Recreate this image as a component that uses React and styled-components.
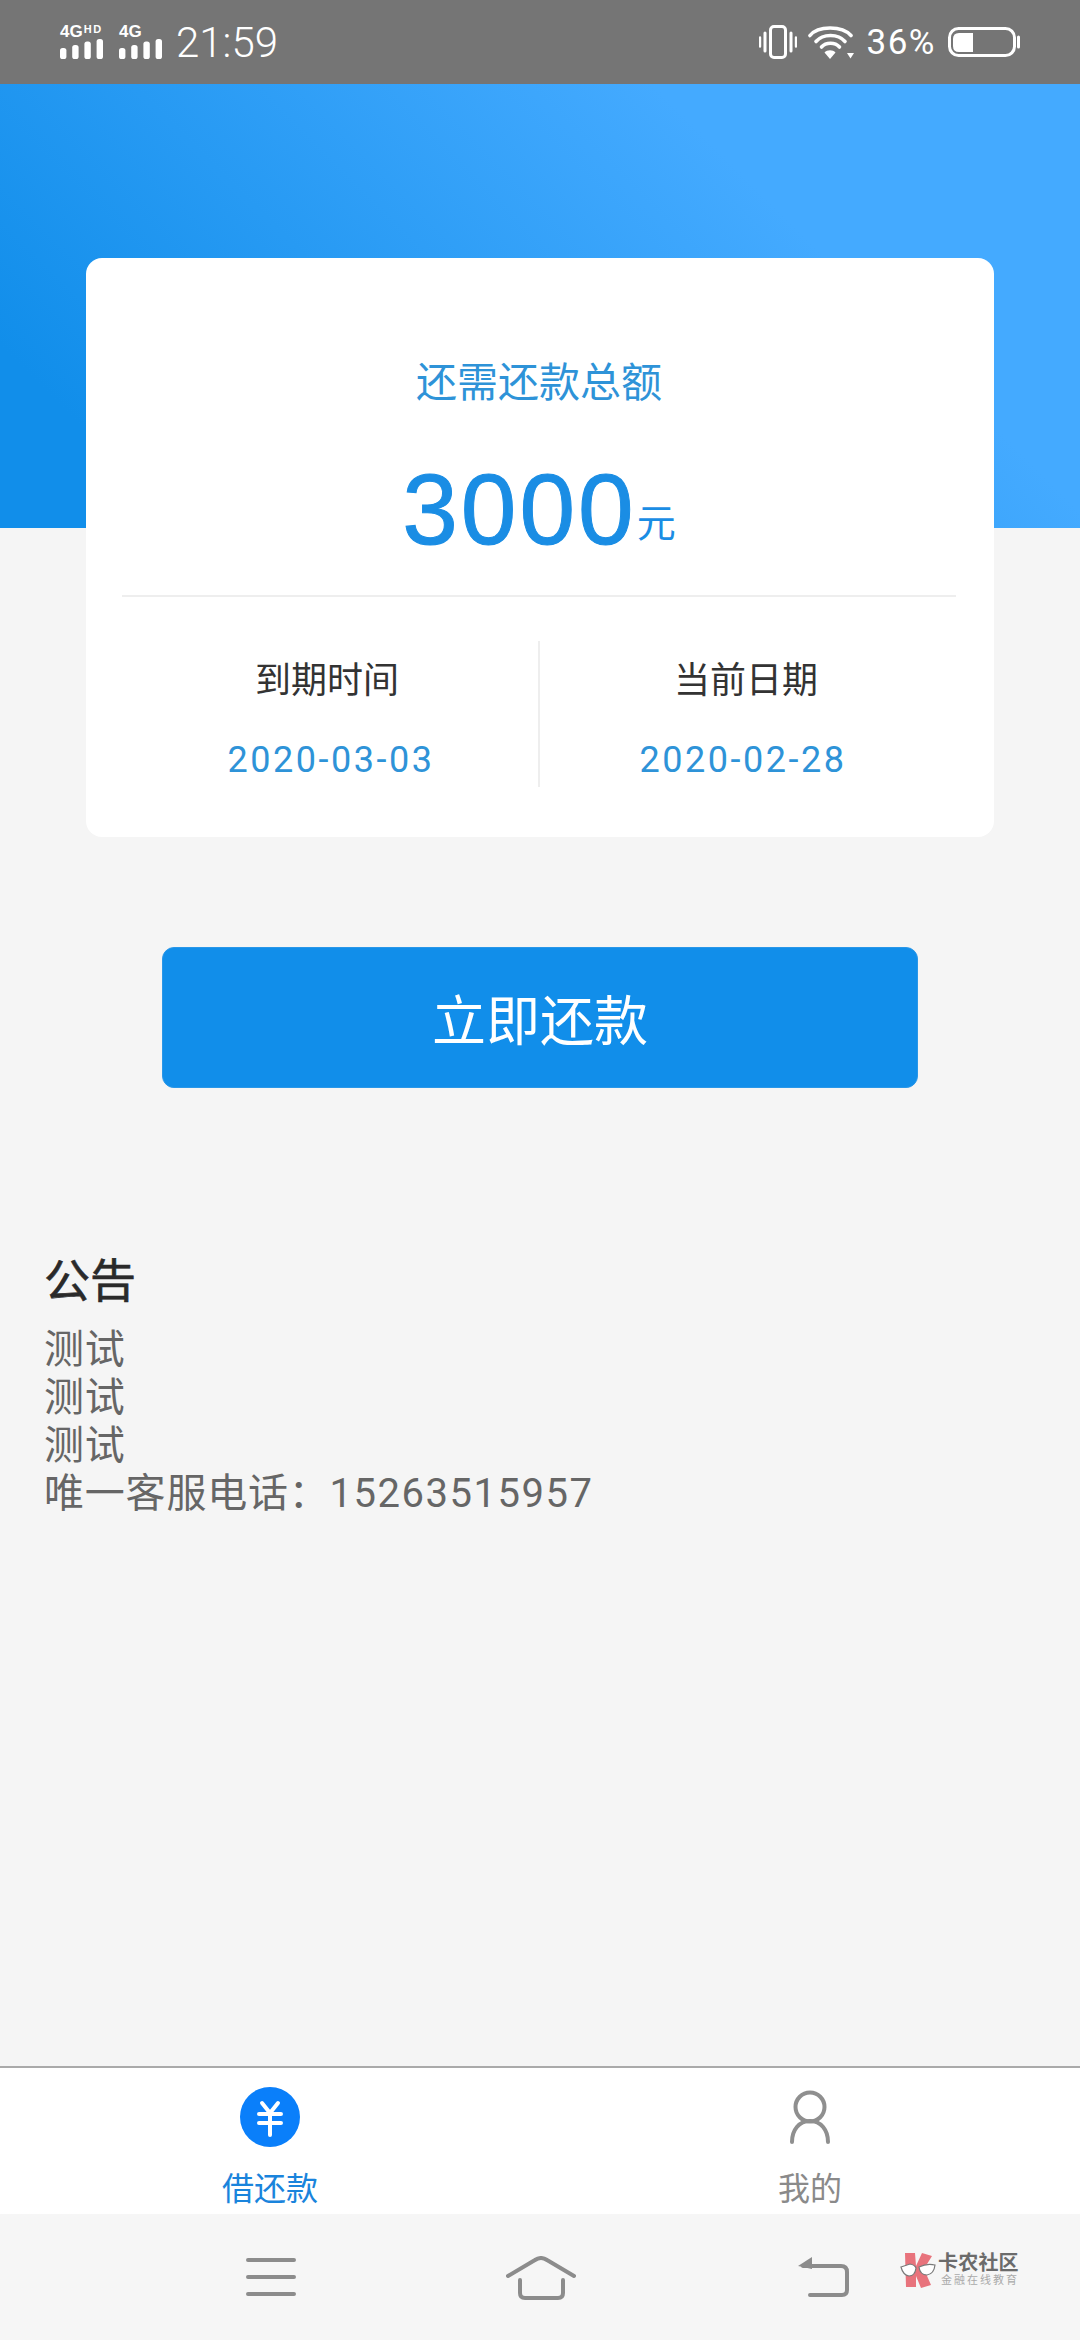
import styled, { createGlobalStyle } from "styled-components";

const CJK = `Roboto, "Noto Sans CJK SC", sans-serif`;

const GlobalStyle = createGlobalStyle`
  html, body {
    margin: 0;
    padding: 0;
    background: #f5f5f5;
    font-family: ${CJK};
  }
  * {
    box-sizing: border-box;
  }
`;

const Page = styled.div`
  width: 1080px;
  height: 2340px;
  display: flex;
  flex-direction: column;
  background: #f5f5f5;
  overflow: hidden;
`;

const StatusBar = styled.div`
  height: 84px;
  flex: none;
  background: #757575;
  color: #fff;
  display: flex;
  align-items: center;
  justify-content: space-between;
  padding: 0 60px 0 60px;
`;

const StatusGroup = styled.div`
  display: flex;
  align-items: center;
`;

const SignalBlock = styled.div`
  display: flex;
  flex-direction: column;
  margin-right: ${(p) => p.$gap}px;
  height: 34px;
  margin-top: -1px;
`;

const NetLabel = styled.div`
  display: flex;
  font-family: "Liberation Sans", sans-serif;
  font-weight: 700;
  font-size: 17px;
  line-height: 13px;
  height: 14px;
  white-space: nowrap;
`;

const NetSuffix = styled.span`
  font-size: 11px;
  line-height: 9px;
  letter-spacing: 1.5px;
  margin-left: 1px;
`;

const Clock = styled.div`
  font-size: 42px;
  font-weight: 300;
  line-height: 44px;
  margin-top: 2px;
`;

const Percent = styled.div`
  font-size: 35px;
  font-weight: 400;
  line-height: 40px;
  letter-spacing: 1.5px;
  margin: 2px 12px 0 13px;
`;

const Hero = styled.div`
  height: 444px;
  flex: none;
  background: linear-gradient(45deg, #118eea 12%, #44aaff 72%);
`;

const Card = styled.div`
  position: relative;
  width: 908px;
  height: 579px;
  flex: none;
  margin: -270px 0 0 86px;
  background: #fff;
  border-radius: 16px;
  padding: 0 38px 0 36px;
  display: flex;
  flex-direction: column;
`;

const CardTitle = styled.div`
  margin-top: 99px;
  height: 52px;
  line-height: 52px;
  font-size: 41px;
  text-align: center;
  color: #2e93d8;
`;

const AmountRow = styled.div`
  margin-top: 50px;
  height: 100px;
  display: flex;
  justify-content: center;
  align-items: flex-end;
  color: #1a8de4;
`;

const Amount = styled.span`
  font-family: "Liberation Sans", sans-serif;
  font-size: 100px;
  line-height: 100px;
  letter-spacing: 3px;
  -webkit-text-stroke: 1px #1a8de4;
`;

const Unit = styled.span`
  font-size: 39px;
  line-height: 40px;
  margin-bottom: 15px;
`;

const Divider = styled.div`
  margin-top: 36px;
  height: 2px;
  flex: none;
  background: #eee;
`;

const DateRow = styled.div`
  margin-top: 44px;
  height: 146px;
  display: grid;
  grid-template-columns: 1fr 418px;
`;

const DateCell = styled.div`
  display: flex;
  flex-direction: column;
  align-items: center;
  border-left: ${(p) => (p.$line ? "2px solid #eee" : "none")};
  padding-right: ${(p) => (p.$line ? "4px" : "6px")};
`;

const DateLabel = styled.div`
  margin-top: 16px;
  height: 48px;
  line-height: 48px;
  font-size: 36px;
  color: #333;
`;

const DateValue = styled.div`
  margin-top: 31px;
  margin-left: ${(p) => p.$shift}px;
  height: 48px;
  line-height: 48px;
  font-size: 36px;
  letter-spacing: 2.5px;
  color: #2e93d8;
`;

const PayButton = styled.button`
  display: block;
  flex: none;
  width: 756px;
  height: 141px;
  margin: 110px 0 0 162px;
  padding: 0;
  border: 1px solid #2a97e8;
  border-radius: 12px;
  background: #118eea;
  color: #fff;
  font-family: ${CJK};
  font-size: 54px;
`;

const Notice = styled.div`
  margin-top: 161px;
  padding-left: 44px;
  flex: 1;
`;

const NoticeTitle = styled.div`
  font-size: 46px;
  font-weight: 400;
  line-height: 64px;
  color: #2a2a2a;
  -webkit-text-stroke: 0.6px #2a2a2a;
  margin-bottom: 13px;
`;

const NoticeLine = styled.div`
  font-size: 40px;
  line-height: 48px;
  color: #666;
  letter-spacing: 0.8px;
`;

const Phone = styled.span`
  letter-spacing: 1.5px;
`;

const TabBar = styled.div`
  height: 148px;
  flex: none;
  background: #fff;
  border-top: 2px solid #aaa;
  display: grid;
  grid-template-columns: 1fr 1fr;
`;

const Tab = styled.div`
  display: flex;
  flex-direction: column;
  align-items: center;
  padding-top: 19px;
`;

const TabIcon = styled.div`
  height: 60px;
  display: flex;
  align-items: center;
  justify-content: center;
`;

const TabLabel = styled.div`
  margin-top: 20px;
  font-size: 32px;
  line-height: 44px;
  color: ${(p) => (p.$active ? "#1a84dc" : "#8a8a8a")};
`;

const NavBar = styled.div`
  position: relative;
  height: 126px;
  flex: none;
  background: #f6f6f6;
  display: flex;
  align-items: flex-start;
  padding: 42px 0 0 246px;
`;

const NavIcon = styled.svg`
  display: block;
  flex: none;
  margin-right: ${(p) => p.$gap || 0}px;
`;

const Watermark = styled.div`
  position: absolute;
  left: 900px;
  top: 38px;
  display: flex;
  align-items: center;
  gap: 2px;
`;

const MarkText = styled.div`
  display: flex;
  flex-direction: column;
`;

const MarkTitle = styled.div`
  font-size: 20px;
  line-height: 21px;
  font-weight: 700;
  color: #6b6b6b;
  letter-spacing: 0.2px;
  white-space: nowrap;
`;

const MarkSub = styled.div`
  font-size: 11px;
  line-height: 14px;
  color: #aaa;
  letter-spacing: 2px;
  white-space: nowrap;
  margin-left: 3px;
`;

const SignalBars = () => (
  <svg width="43" height="20" viewBox="0 0 43 20" fill="#fff">
    <rect x="0" y="9" width="6.4" height="11" rx="2.6" />
    <rect x="12.2" y="6" width="6.4" height="14" rx="2.6" />
    <rect x="24.4" y="2.5" width="6.4" height="17.5" rx="2.6" />
    <rect x="36.6" y="0" width="6.4" height="20" rx="2.6" />
  </svg>
);

const VibrateIcon = () => (
  <svg width="38" height="34" viewBox="0 0 38 34" fill="none" stroke="#fff" strokeLinecap="round" style={{ marginRight: 11 }}>
    <rect x="11.5" y="1.5" width="15" height="31" rx="3.5" strokeWidth="3" />
    <path d="M6 8v18M32 8v18" strokeWidth="3" />
    <path d="M1 12.5v9M37 12.5v9" strokeWidth="2.4" />
  </svg>
);

const WifiIcon = () => (
  <svg width="46" height="33" viewBox="0 0 46 33" fill="none" stroke="#fff" strokeWidth="3.6" strokeLinecap="round">
    <path d="M2 9.5 C10 -0.5 34 -0.5 43 9.5" />
    <path d="M8 15.5 C15 7.5 30 7.5 37 15.5" />
    <path d="M13.5 21 C18 16 27 16 31.5 21" />
    <path d="M16.5 26.5 L22 33 L27.5 26.5 C25 23.5 19 23.5 16.5 26.5 Z" fill="#fff" stroke="none" />
    <path d="M39 27 H46 L42.5 32.5 Z" fill="#fff" stroke="none" />
  </svg>
);

const BatteryIcon = () => (
  <svg width="72" height="30" viewBox="0 0 72 30" fill="none">
    <rect x="1.5" y="1.5" width="65" height="27" rx="9" stroke="#fff" strokeWidth="3" />
    <path d="M25 6 V25 H11 Q5 25 5 19 V12 Q5 6 11 6 Z" fill="#fff" />
    <path d="M70.5 10 V20" stroke="#fff" strokeWidth="3" strokeLinecap="round" />
  </svg>
);

const YuanIcon = () => (
  <svg width="60" height="60" viewBox="0 0 60 60">
    <circle cx="30" cy="30" r="30" fill="#0a7ffa" />
    <path d="M22 16 L30 26 L38 16 M19 27 H41 M19 36 H41 M30 26 V48" fill="none" stroke="#fff" strokeWidth="4" strokeLinecap="round" />
  </svg>
);

const PersonIcon = () => (
  <svg width="42" height="54" viewBox="0 0 42 54" fill="none" stroke="#8f8f8f" strokeWidth="4" strokeLinecap="round">
    <circle cx="21" cy="17" r="14.5" />
    <path d="M3 52 C3 40 10 31 21 31 C32 31 39 40 39 52" />
  </svg>
);

const MenuIcon = () => (
  <NavIcon $gap={210} width="50" height="42" viewBox="0 0 50 42" fill="none" stroke="#8c8c8c" strokeWidth="4" strokeLinecap="round">
    <path d="M2 4 H48 M2 21 H48 M2 38 H48" />
  </NavIcon>
);

const HomeIcon = () => (
  <NavIcon $gap={221} width="70" height="44" viewBox="0 0 70 44" fill="none" stroke="#8c8c8c" strokeWidth="4" strokeLinecap="round">
    <path d="M2 20 L29 4 Q35 0 41 4 L68 20" />
    <path d="M14 24 V37 Q14 42 19 42 H52 Q57 42 57 37 V24" />
  </NavIcon>
);

const BackIcon = () => (
  <NavIcon width="52" height="42" viewBox="0 0 52 42" fill="none" stroke="#8c8c8c" strokeWidth="4" strokeLinecap="round">
    <path d="M6 10 H44 Q50 10 50 16 V34 Q50 39 45 39 H13" />
    <path d="M1 10 L15 1 V13 Z" fill="#8c8c8c" stroke="none" />
  </NavIcon>
);

const MarkLogo = () => (
  <svg width="36" height="36" viewBox="0 0 36 36">
    <path d="M5 1 H15 L16 14 L22 1 L32 4 L24 17 L31 33 L21 36 L16 24 V35 H6 Z" fill="#e8737c" />
    <path d="M1 15 L10 12 Q15 13 16 16 Q15 24 9 24 Q3 23 1 15 Z M19 15 Q27 11 35 13 Q34 22 27 23 Q20 23 19 15 Z" fill="#fff" stroke="#7a7a7a" strokeWidth="1.2" />
  </svg>
);

const App = () => {
  return (
    <Page>
      <GlobalStyle />
      <StatusBar>
        <StatusGroup>
          <SignalBlock $gap={16}>
            <NetLabel>
              4G<NetSuffix>HD</NetSuffix>
            </NetLabel>
            <SignalBars />
          </SignalBlock>
          <SignalBlock $gap={14}>
            <NetLabel>4G</NetLabel>
            <SignalBars />
          </SignalBlock>
          <Clock>21:59</Clock>
        </StatusGroup>
        <StatusGroup>
          <VibrateIcon />
          <WifiIcon />
          <Percent>36%</Percent>
          <BatteryIcon />
        </StatusGroup>
      </StatusBar>
      <Hero />
      <Card>
        <CardTitle>还需还款总额</CardTitle>
        <AmountRow>
          <Amount>3000</Amount>
          <Unit>元</Unit>
        </AmountRow>
        <Divider />
        <DateRow>
          <DateCell>
            <DateLabel>到期时间</DateLabel>
            <DateValue $shift={8}>2020-03-03</DateValue>
          </DateCell>
          <DateCell $line>
            <DateLabel>当前日期</DateLabel>
            <DateValue $shift={-6}>2020-02-28</DateValue>
          </DateCell>
        </DateRow>
      </Card>
      <PayButton>立即还款</PayButton>
      <Notice>
        <NoticeTitle>公告</NoticeTitle>
        <NoticeLine>测试</NoticeLine>
        <NoticeLine>测试</NoticeLine>
        <NoticeLine>测试</NoticeLine>
        <NoticeLine>
          唯一客服电话：<Phone>15263515957</Phone>
        </NoticeLine>
      </Notice>
      <TabBar>
        <Tab>
          <TabIcon>
            <YuanIcon />
          </TabIcon>
          <TabLabel $active>借还款</TabLabel>
        </Tab>
        <Tab>
          <TabIcon>
            <PersonIcon />
          </TabIcon>
          <TabLabel>我的</TabLabel>
        </Tab>
      </TabBar>
      <NavBar>
        <MenuIcon />
        <HomeIcon />
        <BackIcon />
        <Watermark>
          <MarkLogo />
          <MarkText>
            <MarkTitle>卡农社区</MarkTitle>
            <MarkSub>金融在线教育</MarkSub>
          </MarkText>
        </Watermark>
      </NavBar>
    </Page>
  );
};

export default App;
